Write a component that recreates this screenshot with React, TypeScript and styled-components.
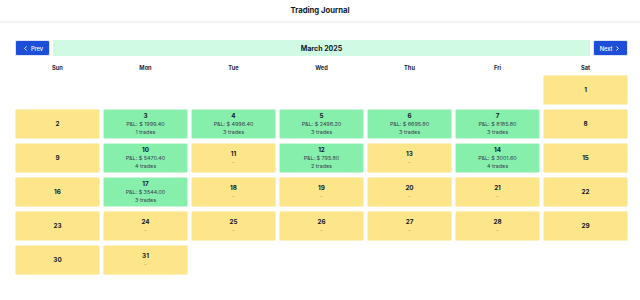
import * as React from "react";
import styled, { createGlobalStyle } from "styled-components";
import { ChevronLeft, ChevronRight } from "lucide-react";

type Trade = { pnl: number; trades: number };

const tradeData: Record<number, Trade> = {
  3: { pnl: 1999.4, trades: 1 },
  4: { pnl: 4996.4, trades: 3 },
  5: { pnl: 2498.2, trades: 3 },
  6: { pnl: 6695.8, trades: 3 },
  7: { pnl: 8185.8, trades: 3 },
  10: { pnl: 5470.4, trades: 4 },
  12: { pnl: 795.8, trades: 2 },
  14: { pnl: 3001.6, trades: 4 },
  17: { pnl: 3544.0, trades: 3 },
};

const weekdays = ["Sun", "Mon", "Tue", "Wed", "Thu", "Fri", "Sat"];

// March 2025 starts on a Saturday
const firstWeekday = 6;
const daysInMonth = 31;

export default function App() {
  const blanks = Array.from({ length: firstWeekday });
  const days = Array.from({ length: daysInMonth }, (_, i) => i + 1);

  return (
    <>
      <GlobalStyle />
      <Header>
        <Title>Trading Journal</Title>
      </Header>
      <Main>
        <Nav>
          <NavButton>
            <ChevronLeft size={7} strokeWidth={3} />
            Prev
          </NavButton>
          <MonthBar>March 2025</MonthBar>
          <NavButton>
            Next
            <ChevronRight size={7} strokeWidth={3} />
          </NavButton>
        </Nav>

        <Weekdays>
          {weekdays.map((d) => (
            <Weekday key={d}>{d}</Weekday>
          ))}
        </Weekdays>

        <Days>
          {blanks.map((_, i) => (
            <Blank key={"b" + i} />
          ))}
          {days.map((day) => {
            const weekday = (firstWeekday + day - 1) % 7;
            const weekend = weekday === 0 || weekday === 6;
            const t = tradeData[day];
            return (
              <DayCell key={day} $profit={!!t}>
                <DayNum>{day}</DayNum>
                {t && (
                  <>
                    <Pnl>P&amp;L: $ {t.pnl.toFixed(2)}</Pnl>
                    <Trades>{t.trades} trades</Trades>
                  </>
                )}
                {!t && !weekend && <Dash>-</Dash>}
              </DayCell>
            );
          })}
        </Days>
      </Main>
    </>
  );
}

const GlobalStyle = createGlobalStyle`
  body {
    margin: 0;
    background: #fff;
    font-family: Inter, "Noto Sans", sans-serif;
    color: #111827;
  }
`;

const Header = styled.header`
  height: 21px;
  display: flex;
  align-items: center;
  justify-content: center;
  border-bottom: 2px solid #f4f4f5;
`;

const Title = styled.h1`
  margin: 0;
  font-size: 7.7px;
  font-weight: 700;
  color: #111827;
`;

const Main = styled.main`
  padding: 17px 12px 0 15px;
`;

const Nav = styled.div`
  display: flex;
  gap: 3px;
  height: 16px;
`;

const NavButton = styled.button`
  width: 35px;
  flex: none;
  display: flex;
  align-items: center;
  justify-content: center;
  gap: 2px;
  padding: 0;
  background: #1d4ed8;
  color: #fff;
  border: 1px solid #dbe3f5;
  border-radius: 2px;
  font-family: inherit;
  font-size: 5.7px;
  font-weight: 500;
`;

const MonthBar = styled.div`
  flex: 1;
  display: flex;
  align-items: center;
  justify-content: center;
  background: #d1fae5;
  font-size: 7px;
  font-weight: 700;
`;

const Weekdays = styled.div`
  display: grid;
  grid-template-columns: repeat(7, 1fr);
  gap: 3px;
  height: 19px;
  box-sizing: border-box;
  padding-top: 3px;
  align-items: center;
`;

const Weekday = styled.div`
  text-align: center;
  font-size: 5.7px;
  font-weight: 700;
  color: #1f2937;
`;

const Days = styled.div`
  display: grid;
  grid-template-columns: repeat(7, 1fr);
  grid-auto-rows: 30px;
  gap: 4px 3px;
`;

const Blank = styled.div``;

const DayCell = styled.div<{ $profit: boolean }>`
  display: flex;
  flex-direction: column;
  align-items: center;
  justify-content: center;
  background: ${(p) => (p.$profit ? "#86efac" : "#fde68a")};
  border: 1px solid ${(p) => (p.$profit ? "#c9f5d8" : "#fcefc0")};
  border-radius: 2px;
  box-sizing: border-box;
  line-height: 8px;
`;

const DayNum = styled.div`
  font-size: 6.3px;
  font-weight: 700;
  color: #111827;
`;

const Pnl = styled.div`
  font-size: 5.4px;
  color: #374151;
`;

const Trades = styled.div`
  font-size: 5.4px;
  color: #374151;
`;

const Dash = styled.div`
  font-size: 5px;
  color: #6b7280;
`;
